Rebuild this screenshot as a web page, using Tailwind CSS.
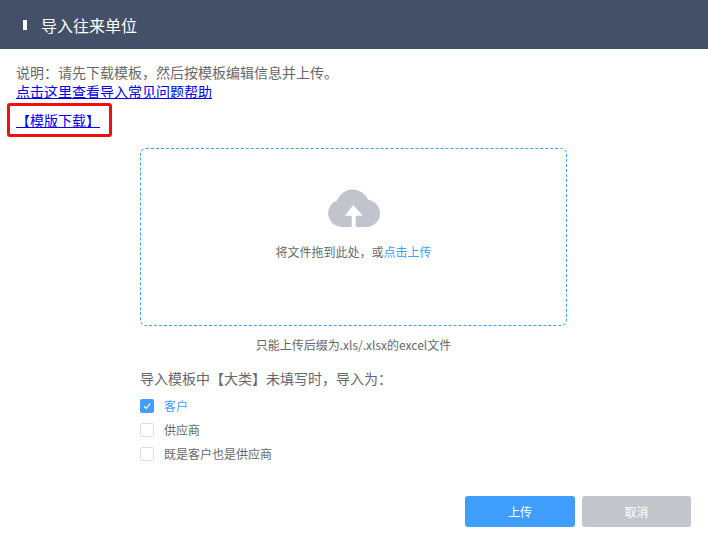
<!DOCTYPE html>
<html lang="zh-CN">
<head>
  <meta charset="UTF-8">
  <title>导入往来单位</title>
  <script src="https://cdn.jsdelivr.net/npm/@tailwindcss/browser@4"></script>
</head>
<body class="bg-white font-['Noto_Sans_CJK_SC',sans-serif]">
  <div class="relative w-[708px] h-[544px] overflow-hidden">
    <!-- Header -->
    <header class="h-[49px] bg-[#435068] flex items-center pl-[23px]">
      <span class="w-[4px] h-[10px] bg-white"></span>
      <h1 class="ml-[14px] text-[16px] text-white">导入往来单位</h1>
    </header>

    <!-- Help text -->
    <div class="pl-4 pt-[14px] text-[14px] leading-[19px]">
      <p class="text-[#66686d]">说明：请先下载模板，然后按模板编辑信息并上传。</p>
      <a href="#" class="block w-fit text-[#0000ee] underline">点击这里查看导入常见问题帮助</a>
      <a href="#" class="block w-fit mt-[10px] text-[#0000ee] underline">【模版下载】</a>
    </div>

    <!-- Annotation -->
    <div class="absolute left-[7px] top-[103px] w-[105px] h-[34px] border-[3px] border-[#ee1111] rounded-[3px]"></div>

    <!-- Upload -->
    <div class="w-[427px] ml-[140px] mt-[18px]">
      <div class="h-[178px] border border-dashed border-[#409eff] rounded-[6px] flex flex-col items-center pt-[39px]">
        <svg class="w-[52px] h-[39px]" viewBox="0 0 52 39">
          <path fill="#c0c4cc" d="M13.700 39A13.700 13.700 0 0 1 9 12.500A16.500 16 0 0 1 40 11.700A13.700 13.700 0 0 1 38.300 39H27.700V27.700H34.700L25.300 17L16.700 27.700H23.700V39Z"/>
        </svg>
        <p class="mt-[16px] text-[12px] text-[#66686d]">将文件拖到此处，或<span class="text-[#409eff]">点击上传</span></p>
      </div>
      <p class="mt-[10px] text-center text-[12px] text-[#66686d]">只能上传后缀为.xls/.xlsx的excel文件</p>

      <!-- Options -->
      <p class="mt-[14px] text-[14px] text-[#66686d]">导入模板中【大类】未填写时，导入为：</p>
      <div class="mt-[10px] flex flex-col gap-[10px] text-[12px] leading-[14px] text-[#66686d]">
        <label class="flex items-center gap-[10px] text-[#409eff]">
          <span class="w-[14px] h-[14px] rounded-[2px] bg-[#409eff] flex items-center justify-center">
            <svg class="w-[10px] h-[10px]" viewBox="0 0 10 10" fill="none" stroke="white" stroke-width="1.300"><path d="M2 5.200L4.200 7.400L8.200 2.600"/></svg>
          </span>
          客户
        </label>
        <label class="flex items-center gap-[10px]">
          <span class="w-[14px] h-[14px] rounded-[2px] border border-[#dcdfe6]"></span>
          供应商
        </label>
        <label class="flex items-center gap-[10px]">
          <span class="w-[14px] h-[14px] rounded-[2px] border border-[#dcdfe6]"></span>
          既是客户也是供应商
        </label>
      </div>
    </div>

    <!-- Footer -->
    <div class="absolute left-[465px] top-[496px] flex gap-[7px]">
      <button class="w-[110px] h-[31px] rounded-[3px] bg-[#409eff] text-white text-[12px]">上传</button>
      <button class="w-[109px] h-[31px] rounded-[3px] bg-[#c4c6cd] text-white text-[12px]">取消</button>
    </div>
  </div>
</body>
</html>
